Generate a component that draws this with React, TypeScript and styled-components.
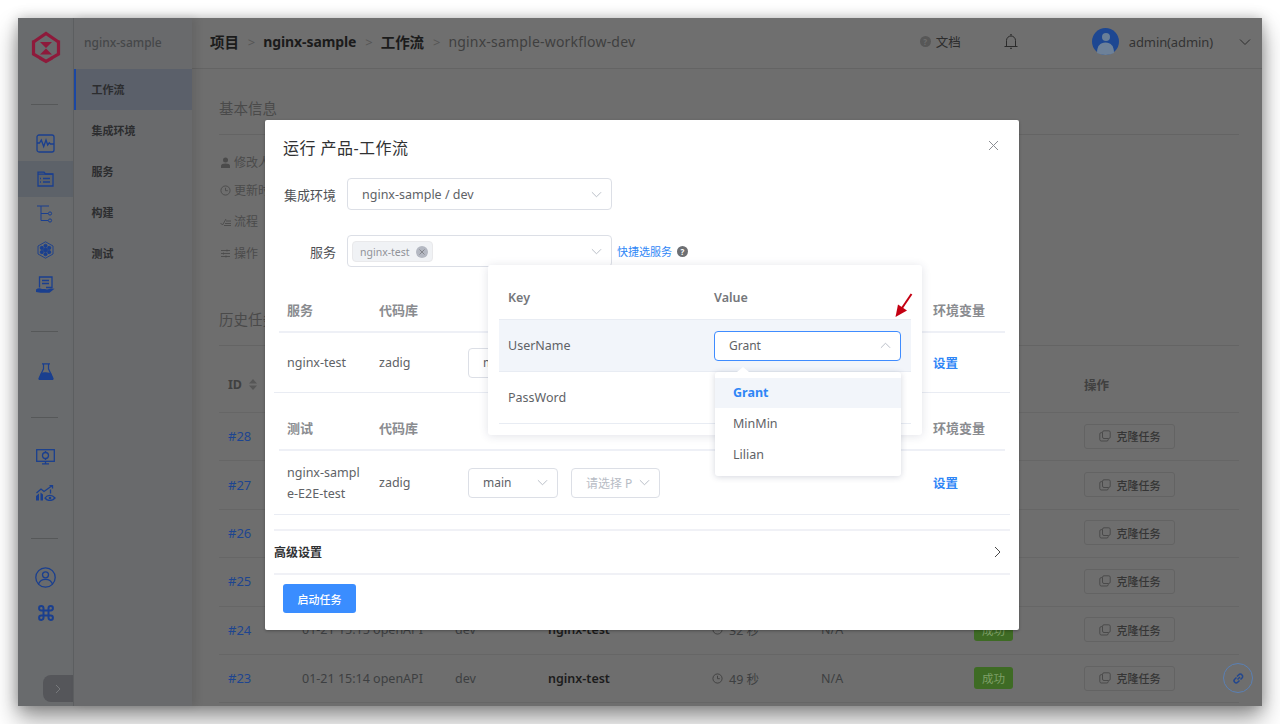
import React from "react";
import styled, { createGlobalStyle } from "styled-components";

const FONT = `"Noto Sans", "Noto Sans CJK SC", sans-serif`;

const Global = createGlobalStyle`
  html, body { margin: 0; padding: 0; background: #fff; }
  body { font-family: ${FONT}; }
  * { box-sizing: border-box; }
`;

const Page = styled.div`
  width: 1280px; height: 724px; padding: 18px; background: #fff; overflow: hidden;
`;
const Win = styled.div`
  position: relative; display: flex; width: 1244px; height: 688px; background: #6e6e6e;
  box-shadow: 0 12px 22px rgba(0,0,0,.42), 0 0 12px rgba(0,0,0,.22);
`;

/* ---------- icon rail ---------- */
const Rail = styled.aside`
  position: relative; flex: 0 0 56px; display: flex; flex-direction: column;
  background: #696b6d; border-right: 1px solid #5e6062;
`;
const LogoBox = styled.div`
  height: 58px; display: flex; align-items: center; justify-content: center;
`;
const RailRule = styled.div<{ $top: number; $bottom: number }>`
  width: 27px; height: 1px; background: #565859; flex: none;
  margin: ${p => p.$top}px 0 ${p => p.$bottom}px 13px;
`;
const RailItem = styled.div<{ $active?: boolean }>`
  height: 35.5px; display: flex; align-items: center; justify-content: center; flex: none;
  color: #1a3f8f; background: ${p => (p.$active ? "#5d6269" : "transparent")};
`;
const Collapse = styled.div`
  position: absolute; left: 25px; bottom: 4px; width: 30px; height: 27px;
  background: #55565a; border-radius: 8px 0 0 8px; display: flex; align-items: center; justify-content: center;
  color: #77797c;
`;

/* ---------- secondary nav ---------- */
const SideNav = styled.nav`
  flex: 0 0 118px; background: #696a6c; display: flex; flex-direction: column;
  box-shadow: 4px 0 8px rgba(0,0,0,.1); z-index: 1;
`;
const NavTitle = styled.div`
  height: 51px; display: flex; align-items: center; padding: 0 0 2px 10px;
  font-size: 12px; font-weight: 500; color: #454749;
`;
const NavItem = styled.div<{ $active?: boolean }>`
  height: 41px; display: flex; align-items: center; padding: 0 0 2px 15.5px;
  font-size: 11px; font-weight: 600; color: #2c2d2f;
  background: ${p => (p.$active ? "#5b606a" : "transparent")};
  border-left: 2.5px solid ${p => (p.$active ? "#1b47a3" : "transparent")};
`;

/* ---------- main ---------- */
const Main = styled.main`
  flex: 1; min-width: 0; display: flex; flex-direction: column; background: #6e6e6e;
`;
const Top = styled.header`
  height: 51px; flex: none; display: flex; align-items: center; padding: 0 0 3px 18px;
  background: #6f6f6f; border-bottom: 1px solid #646464;
`;
const Crumb = styled.span<{ $strong?: boolean }>`
  font-size: 14px; font-weight: ${p => (p.$strong ? 700 : 400)}; letter-spacing: ${p => (p.$strong ? -.1 : .2)}px;
  color: ${p => (p.$strong ? "#1b1b1b" : "#3f3f3f")};
`;
const CrumbStrongCn = styled(Crumb)`
  font-size: 14.5px;
`;
const CrumbSep = styled.span`
  margin: 0 8px 0 9px; font-size: 13px; color: #555; font-weight: 400;
`;
const TopRight = styled.div`
  margin-left: auto; display: flex; align-items: center; height: 100%; color: #2e2e2e;
`;
const DocLink = styled.div`
  display: flex; align-items: center; gap: 5px; font-size: 12.5px; color: #2c2c2c; margin-right: 43px;
`;
const HelpDot = styled.span`
  width: 11px; height: 11px; border-radius: 50%; background: #575757; color: #6e6e6e;
  font-size: 8px; font-weight: 700; line-height: 11px; text-align: center; flex: none;
`;
const BellGap = styled.span`
  width: 74px;
`;
const UserName = styled.span`
  font-size: 13px; color: #333; margin: 0 26px 0 10px; letter-spacing: -.1px;
`;
const EndGap = styled.span`
  width: 11px;
`;
const Content = styled.div`
  flex: 1; min-height: 0; padding: 27px 23px 0 27px; overflow: hidden;
`;
const SectionTitle = styled.h3`
  margin: 0; font-size: 14.5px; line-height: 24px; height: 39px; font-weight: 400; color: #4a4a4a;
  border-bottom: 1px solid #646464;
`;
const Info = styled.div`
  display: flex; flex-direction: column; padding: 13px 0 0 1px; height: 172px;
`;
const InfoRow = styled.div<{ $h: number }>`
  height: ${p => p.$h}px; display: flex; align-items: center; gap: 3px; color: #4b4b4b;
  font-size: 12px;
`;
const TableGrid = styled.div`
  display: grid; grid-template-columns: 83px 153px 93px 164px 109px 153px 110px 155px;
  align-items: center; height: 48.4px; padding-bottom: 1px; border-bottom: 1px solid #666; font-size: 12.5px; color: #3d3f41;
`;
const TableHead = styled(TableGrid)`
  height: 67px; padding: 11px 0 0; font-weight: 700; color: #404040; font-size: 12.5px;
`;
const IdHead = styled.span`
  padding-left: 9px; display: flex; align-items: center; gap: 7px; color: #404040;
`;
const RunId = styled.span`
  padding-left: 9px; color: #1d4590; font-size: 13px;
`;
const Service = styled.span`
  font-weight: 600; color: #1c1c1c;
`;
const Duration = styled.span`
  display: flex; align-items: center; gap: 6px;
`;
const Badge = styled.span`
  display: inline-flex; align-items: center; justify-content: center; width: 39px; height: 22px;
  border-radius: 3px; background: #3e6b24; color: #7ea068; font-size: 11.5px;
`;
const Clone = styled.div`
  width: 91px; height: 25px; border: 1px solid #636363; border-radius: 3px; display: flex;
  align-items: center; justify-content: center; gap: 6px; font-size: 11px; font-weight: 500; color: #353535;
`;
const FloatLink = styled.div`
  position: absolute; right: 9px; bottom: 13px; width: 30px; height: 30px; border-radius: 50%;
  border: 1px solid #5a80b4; color: #23478e; display: flex; align-items: center; justify-content: center;
`;

/* ---------- modal ---------- */
const Modal = styled.section`
  position: absolute; left: 247px; top: 102px; width: 754px; height: 510px; background: #fff;
  z-index: 5; border-radius: 2px; display: flex; flex-direction: column; box-shadow: 0 1px 3px rgba(0,0,0,.3);
`;
const ModalHead = styled.div`
  height: 58px; flex: none; display: flex; align-items: center; justify-content: space-between;
  padding: 0 20px 2px 18px;
`;
const ModalTitle = styled.h2`
  margin: 0; font-size: 16px; line-height: 22px; font-weight: 400; color: #303133; letter-spacing: .45px;
`;
const Close = styled.span`
  display: flex; color: #8b8e94; position: relative; top: -3px;
`;
const FormRow = styled.div<{ $mt?: number }>`
  display: flex; align-items: center; height: 32px; margin-top: ${p => p.$mt ?? 0}px; flex: none;
`;
const FormLabel = styled.label`
  width: 71px; text-align: right; margin-right: 11px; font-size: 13px; color: #4f5155;
`;
const Select = styled.div<{ $w: number; $h?: number; $focus?: boolean; $fs?: number }>`
  position: relative; width: ${p => p.$w}px; height: ${p => p.$h ?? 32}px; flex: none; background: #fff;
  border: 1px solid ${p => (p.$focus ? "#3f8cff" : "#dcdfe6")}; border-radius: 4px;
  display: flex; align-items: center; justify-content: space-between; color: #606266;
  font-size: ${p => p.$fs ?? 12.5}px; padding: 0 9px 0 14px;
`;
const Placeholder = styled.span`
  color: #b7bcc5; white-space: nowrap;
`;
const Chevron = styled.svg`
  flex: none; color: #b4b9c3;
`;
const Tag = styled.span`
  position: absolute; left: 4px; top: 5px; width: 81px; height: 21px; background: #f0f2f5;
  border: 1px solid #e9e9eb; border-radius: 4px; display: flex; align-items: center; justify-content: space-between;
  padding: 0 4px 0 7px; font-size: 10.5px; color: #909399;
`;
const TagClose = styled.span`
  width: 12px; height: 12px; border-radius: 50%; background: #b4b8c2; color: #84868c; display: flex;
  align-items: center; justify-content: center;
`;
const Quick = styled.span`
  margin-left: 5px; font-size: 11px; color: #2f86f6; display: flex; align-items: center; gap: 5px;
`;
const QuickHelp = styled.span`
  width: 11px; height: 11px; border-radius: 50%; background: #6d6f73; color: #fff; font-size: 8px;
  font-weight: 700; line-height: 11px; text-align: center;
`;
const EnvHead = styled.div<{ $h: number }>`
  flex: none; height: ${p => p.$h}px; margin: 0 14px; border-bottom: 2px solid #eef0f6; display: grid;
  grid-template-columns: 92px 89px 465px 1fr; align-items: end; padding: 0 0 12px 8px;
  font-size: 13px; font-weight: 600; color: #8a8c90;
`;
const EnvRow = styled.div<{ $h: number }>`
  flex: none; height: ${p => p.$h}px; margin: 0 9px; border-bottom: 1px solid #e9ecf3; display: grid;
  grid-template-columns: 92px 89px 465px 1fr; align-items: center; padding-left: 13px;
  font-size: 12.5px; color: #606266;
`;
const EnvName = styled.span`
  width: 74px; word-break: break-all; line-height: 21px;
`;
const Branches = styled.div`
  display: flex; gap: 13px;
`;
const SetLink = styled.span`
  color: #2f86f6; font-size: 12.5px; font-weight: 600;
`;
const Advanced = styled.div`
  flex: none; margin: 14px 9px 0; height: 46px; border-top: 2px solid #f0f1f6; border-bottom: 2px solid #f0f1f6;
  display: flex; align-items: center; justify-content: space-between; padding-right: 8px;
  font-size: 12px; font-weight: 600; color: #303133;
`;
const StartBar = styled.div`
  padding: 9px 18px 0;
`;
const StartBtn = styled.button`
  width: 73px; height: 29px; border: 0; border-radius: 3px; background: #3a8dff; color: #fff;
  font-family: ${FONT}; font-size: 11px; font-weight: 500; padding: 0;
`;

/* ---------- popover ---------- */
const Popover = styled.div`
  position: absolute; left: 470px; top: 247px; width: 434px; height: 170px; background: #fff; z-index: 6;
  border-radius: 3px; box-shadow: 0 1px 10px rgba(40,50,90,.14); padding: 0 11px;
  display: flex; flex-direction: column;
`;
const PopRow = styled.div<{ $h: number; $hi?: boolean; $line?: boolean }>`
  height: ${p => p.$h}px; flex: none; display: grid; grid-template-columns: 206px 1fr; align-items: center;
  padding-left: 9px; font-size: 12.5px; color: #606266;
  background: ${p => (p.$hi ? "#f2f5fa" : "transparent")};
  border-top: ${p => (p.$hi ? "1px solid #e8ecf3" : "0")};
  border-bottom: ${p => (p.$line ? "1px solid #e8ecf3" : "0")};
`;
const PopHead = styled(PopRow)`
  font-weight: 600; color: #75777b; padding-top: 10px;
`;
const Dropdown = styled.ul`
  position: absolute; left: 0; top: 40px; width: 186px; height: 104px; margin: 0; padding: 6px 0;
  list-style: none; background: #fff; border-radius: 3px; box-shadow: 0 1px 6px rgba(40,50,90,.2); z-index: 2;
  &::before {
    content: ""; position: absolute; left: 22px; top: -5px; border: 6px solid transparent; border-top: 0;
    border-bottom: 5px solid #fff;
  }
`;
const Option = styled.li<{ $on?: boolean }>`
  height: ${p => (p.$on ? 30 : 31)}px; padding-left: 18px; display: flex; align-items: center; font-size: 12.5px;
  color: ${p => (p.$on ? "#2f86f6" : "#606266")}; font-weight: ${p => (p.$on ? 700 : 400)};
  background: ${p => (p.$on ? "#f2f5fa" : "transparent")};
`;
const RedArrow = styled.svg`
  position: absolute; left: 876px; top: 275px; z-index: 7;
`;

const Down = ({ size = 11, up }: { size?: number; up?: boolean }) => (
  <Chevron width={size} height={size} viewBox="0 0 12 12" fill="none" stroke="currentColor" strokeWidth="1">
    <path d={up ? "M1 8.5 6 3.5l5 5" : "M1 3.5 6 8.5l5-5"} />
  </Chevron>
);
const CopyIcon = () => (
  <svg width="12" height="12" viewBox="0 0 12 12" fill="none" stroke="#4a4a4a" strokeWidth="1">
    <rect x="3.5" y=".8" width="7.7" height="7.7" rx="1.5" />
    <path d="M3.2 2.6H2.2A1.5 1.5 0 0 0 .8 4v5.6A1.5 1.5 0 0 0 2.2 11h5.7a1.5 1.5 0 0 0 1.4-1.5v-.6" />
  </svg>
);
const ClockIcon = ({ c = "#3f3f3f" }: { c?: string }) => (
  <svg width="11" height="11" viewBox="0 0 12 12" fill="none" stroke={c} strokeWidth="1">
    <circle cx="6" cy="6" r="5" /><path d="M6 3v3.2h2.5" />
  </svg>
);

const Logo = () => (
  <svg width="30" height="33" viewBox="0 0 30 33" fill="none">
    <path d="M2.5 11 15 2.500 27.500 11" stroke="#8e1a3b" strokeWidth="3.2" />
    <path d="M2.500 9.500v13.500l7 4.200M27.500 9.500v13.500l-7 4.200" stroke="#8e1a3b" strokeWidth="3.200" />
    <path d="M9 11h12l-6 6z M9 23.500h12l-6-6z" fill="#8e1a3b" />
    <path d="M9 27 15 30.500l6-3.500" stroke="#8e1a3b" strokeWidth="3.200" />
  </svg>
);
const sv = { fill: "none", stroke: "currentColor", strokeWidth: 1.3 } as const;
const Pulse = () => (
  <svg width="19" height="19" viewBox="0 0 19 19" {...sv}>
    <rect x="1" y="1" width="17" height="17" rx="2" />
    <path d="M1 9h2.5l1.8-3 2.4 6.5L10 6l1.7 5 1.6-2.2 1.2 1.2H18" />
  </svg>
);
const FolderList = () => (
  <svg width="17" height="16" viewBox="0 0 17 16" {...sv}>
    <path d="M1 3V1.2h6l1.6 1.8H16V15H1z" />
    <path d="M1 3.2h15M6 7.5h7M6 11h7" />
    <path d="M3 7.5h1M3 11h1" strokeWidth="1.6" />
  </svg>
);
const Tree = () => (
  <svg width="17" height="18" viewBox="0 0 17 18" fill="none" stroke="currentColor" strokeWidth="1">
    <path d="M0 1h12M4 1v14.500h7M4 8.500h7" />
    <circle cx="13" cy="8.500" r="1.600" /><circle cx="13" cy="15.500" r="1.600" />
  </svg>
);
const HexCube = () => (
  <svg width="17" height="18" viewBox="0 0 17 18" fill="none" stroke="currentColor" strokeWidth=".9">
    <path d="M8.500 .8 16 5v8l-7.500 4.200L1 13V5z" />
    <circle cx="8.500" cy="9" r="2" fill="currentColor" />
    <circle cx="8.500" cy="4.800" r="1.600" fill="currentColor" /><circle cx="8.500" cy="13.200" r="1.600" fill="currentColor" />
    <circle cx="4.800" cy="6.900" r="1.600" fill="currentColor" /><circle cx="12.200" cy="6.900" r="1.600" fill="currentColor" />
    <circle cx="4.800" cy="11.100" r="1.600" fill="currentColor" /><circle cx="12.200" cy="11.100" r="1.600" fill="currentColor" />
  </svg>
);
const HandScreen = () => (
  <svg width="19" height="18" viewBox="0 0 19 18" fill="none" stroke="currentColor" strokeWidth="1.3">
    <path d="M3.500 11.500V1h12.500v10.500H10" />
    <path d="M6 4.500h7M6 7.500h7" />
    <path d="M0 13.500c2-1.700 4-1.700 6-.5h3l2 .5 4-1 3.500.3-5 4H4.500L0 16z" fill="currentColor" stroke="none" />
  </svg>
);
const Flask = () => (
  <svg width="16" height="17" viewBox="0 0 16 17" fill="none" stroke="currentColor" strokeWidth="1.2">
    <path d="M4 .8h8M5.500 .8v5L1 15.500a.8.8 0 0 0 .7 1h12.600a.8.8 0 0 0 .7-1L10.500 5.800v-5" />
    <path d="M3 10c3-1.400 6-.3 10 0l2 5.500a.8.8 0 0 1-.7 1H1.700a.8.8 0 0 1-.7-1z" fill="currentColor" stroke="none" />
  </svg>
);
const Monitor = () => (
  <svg width="19" height="16" viewBox="0 0 19 16" {...sv}>
    <rect x=".7" y=".7" width="17.600" height="11.600" />
    <circle cx="9.500" cy="6.500" r="3" /><path d="M9.500 2v1.500M9.500 9.500V11M6 14.800h7M9.500 12.300v2.500" />
  </svg>
);
const ChartEye = () => (
  <svg width="20" height="16" viewBox="0 0 20 16" fill="none" stroke="currentColor" strokeWidth="1.3">
    <path d="M.5 8 5 4l3 2.500L16 .8" />
    <path d="M13.500 .5H16.500V3.500" />
    <path d="M0 15.500V11l3-2.500v7zM4.500 15.500V7.500L7 9.500v6z" fill="currentColor" stroke="none" />
    <path d="M9 13c2.500-3.600 7-3.600 10 0-3 3.300-7.500 3.300-10 0z" />
    <circle cx="14" cy="13" r="1.300" fill="currentColor" stroke="none" />
    <path d="M14.500 4.500v4" />
  </svg>
);
const UserCircle = () => (
  <svg width="21" height="21" viewBox="0 0 21 21" {...sv}>
    <circle cx="10.500" cy="10.500" r="9.700" />
    <circle cx="10.500" cy="7.800" r="3" />
    <path d="M3.500 17c1.200-3.300 3.600-4.700 7-4.700s5.800 1.400 7 4.700" />
  </svg>
);
const Cmd = () => (
  <svg width="16" height="16" viewBox="0 0 16 16" fill="none" stroke="currentColor" strokeWidth="2">
    <path d="M5.500 5.500h5v5h-5zM5.500 5.500V3.200a2.200 2.200 0 1 0-2.200 2.300h2.200M10.500 5.500V3.200a2.200 2.200 0 1 1 2.200 2.300h-2.200M5.500 10.500v2.300a2.200 2.200 0 1 1-2.200-2.300h2.200M10.500 10.500v2.300a2.200 2.200 0 1 0 2.200-2.300h-2.200" />
  </svg>
);
const Bell = () => (
  <svg width="14" height="15" viewBox="0 0 14 15" fill="none" stroke="#2b2b2b" strokeWidth="1">
    <path d="M.5 12.500h13M2.500 12.500V6.500a4.500 4.500 0 0 1 9 0v6M6 .8h2M6 14.300h2" />
  </svg>
);
const Avatar = () => (
  <svg width="27" height="27" viewBox="0 0 27 27">
    <circle cx="13.500" cy="13.500" r="13.500" fill="#1d4792" />
    <circle cx="14" cy="9" r="4" fill="#697f98" />
    <path d="M5 25c0-7 3-10.500 8.500-10.500S22 18 22 25c-5 2.600-12 2.600-17 0z" fill="#6d8199" />
  </svg>
);

const rows = [
  ["#28", "01-21 15:22 openAPI", "40 秒"],
  ["#27", "01-21 15:20 openAPI", "38 秒"],
  ["#26", "01-21 15:19 openAPI", "41 秒"],
  ["#25", "01-21 15:17 openAPI", "35 秒"],
  ["#24", "01-21 15:15 openAPI", "32 秒"],
  ["#23", "01-21 15:14 openAPI", "49 秒"],
];

export default function App() {
  return (
    <Page>
      <Global />
      <Win>
        <Rail>
          <LogoBox><Logo /></LogoBox>
          <RailRule $top={28} $bottom={20.5} />
          <RailItem><Pulse /></RailItem>
          <RailItem $active><FolderList /></RailItem>
          <RailItem><Tree /></RailItem>
          <RailItem><HexCube /></RailItem>
          <RailItem><HandScreen /></RailItem>
          <RailRule $top={28} $bottom={21.5} />
          <RailItem><Flask /></RailItem>
          <RailRule $top={28} $bottom={21.5} />
          <RailItem><Monitor /></RailItem>
          <RailItem><ChartEye /></RailItem>
          <RailRule $top={27} $bottom={21} />
          <RailItem><UserCircle /></RailItem>
          <RailItem><Cmd /></RailItem>
          <Collapse>
            <svg width="8" height="10" viewBox="0 0 8 10" fill="none" stroke="currentColor"><path d="m2 1 4 4-4 4" /></svg>
          </Collapse>
        </Rail>
        <SideNav>
          <NavTitle>nginx-sample</NavTitle>
          <NavItem $active>工作流</NavItem>
          <NavItem>集成环境</NavItem>
          <NavItem>服务</NavItem>
          <NavItem>构建</NavItem>
          <NavItem>测试</NavItem>
        </SideNav>
        <Main>
          <Top>
            <CrumbStrongCn $strong>项目</CrumbStrongCn><CrumbSep>&gt;</CrumbSep>
            <Crumb $strong>nginx-sample</Crumb><CrumbSep>&gt;</CrumbSep>
            <CrumbStrongCn $strong>工作流</CrumbStrongCn><CrumbSep>&gt;</CrumbSep>
            <Crumb>nginx-sample-workflow-dev</Crumb>
            <TopRight>
              <DocLink><HelpDot>?</HelpDot>文档</DocLink>
              <Bell />
              <BellGap />
              <Avatar />
              <UserName>admin(admin)</UserName>
              <svg width="12" height="12" viewBox="0 0 12 12" fill="none" stroke="#2e2e2e" strokeWidth="1">
                <path d="M1 3.500 6 8.500l5-5" />
              </svg>
              <EndGap />
            </TopRight>
          </Top>
          <Content>
            <SectionTitle>基本信息</SectionTitle>
            <Info>
              <InfoRow $h={28}>
                <svg width="11" height="11" viewBox="0 0 11 11" fill="#4b4b4b"><circle cx="5.500" cy="3" r="2.500" /><path d="M1 11V8.800C1 7.300 3 6.500 5.500 6.500S10 7.300 10 8.800V11z" /></svg>修改人
              </InfoRow>
              <InfoRow $h={28}><ClockIcon c="#4b4b4b" />更新时间</InfoRow>
              <InfoRow $h={34}>
                <svg width="11" height="11" viewBox="0 0 11 11" fill="none" stroke="#4b4b4b" strokeWidth=".9"><path d="m.5 7 2 2 3.500-6M6 5h5M5 7.500h6M4 9.500h7" /></svg>流程
              </InfoRow>
              <InfoRow $h={30}>
                <svg width="11" height="11" viewBox="0 0 11 11" fill="none" stroke="#4b4b4b" strokeWidth=".9"><path d="M1 2.500h9M1 5.500h9M1 8.500h9M7 1.500v2M3.500 4.500v2M6 7.500v2" /></svg>操作
              </InfoRow>
            </Info>
            <SectionTitle>历史任务</SectionTitle>
            <TableHead>
              <IdHead>
                ID
                <svg width="8" height="11" viewBox="0 0 8 11" fill="#565656"><path d="M4 0 8 4.500H0zM4 11 0 6.500h8z" /></svg>
              </IdHead>
              <span /><span /><span /><span /><span /><span />
              <span>操作</span>
            </TableHead>
            {rows.map(r => (
              <TableGrid key={r[0]}>
                <RunId>{r[0]}</RunId>
                <span>{r[1]}</span>
                <span>dev</span>
                <Service>nginx-test</Service>
                <Duration><ClockIcon />{r[2]}</Duration>
                <span>N/A</span>
                <span><Badge>成功</Badge></span>
                <Clone><CopyIcon />克隆任务</Clone>
              </TableGrid>
            ))}
          </Content>
        </Main>
        <FloatLink>
          <svg width="13" height="13" viewBox="0 0 13 13" fill="none" stroke="currentColor" strokeWidth="1.5">
            <path d="M5.500 7.500 8 5M5 4.500l1.800-1.800a2 2 0 0 1 3 .1 2.100 2.100 0 0 1 .4 3L8.500 7.500M4.500 5.500 2.700 7.300a2.100 2.100 0 0 0 3 3L7.500 8.500" />
          </svg>
        </FloatLink>

        <Modal>
          <ModalHead>
            <ModalTitle>运行 产品-工作流</ModalTitle>
            <Close>
              <svg width="11" height="11" viewBox="0 0 11 11" stroke="currentColor" strokeWidth="1"><path d="m1 1 9 9M10 1l-9 9" /></svg>
            </Close>
          </ModalHead>
          <FormRow>
            <FormLabel>集成环境</FormLabel>
            <Select $w={265}>nginx-sample / dev<Down /></Select>
          </FormRow>
          <FormRow $mt={25}>
            <FormLabel>服务</FormLabel>
            <Select $w={265}>
              <Tag>nginx-test<TagClose><svg width="6" height="6" viewBox="0 0 6 6" stroke="currentColor"><path d="m.5 .5 5 5M5.500 .5l-5 5" /></svg></TagClose></Tag>
              <span /><Down />
            </Select>
            <Quick>快捷选服务<QuickHelp>?</QuickHelp></Quick>
          </FormRow>
          <EnvHead $h={66}><span>服务</span><span>代码库</span><span /><span>环境变量</span></EnvHead>
          <EnvRow $h={60}>
            <EnvName>nginx-test</EnvName><span>zadig</span>
            <Branches><Select $w={90} $h={30} $fs={12}>main<Down /></Select></Branches>
            <SetLink>设置</SetLink>
          </EnvRow>
          <EnvHead $h={58}><span>测试</span><span>代码库</span><span /><span>环境变量</span></EnvHead>
          <EnvRow $h={64}>
            <EnvName>nginx-sample-E2E-test</EnvName><span>zadig</span>
            <Branches>
              <Select $w={90} $h={30} $fs={12}>main<Down /></Select>
              <Select $w={89} $h={30} $fs={12}><Placeholder>请选择 P</Placeholder><Down /></Select>
            </Branches>
            <SetLink>设置</SetLink>
          </EnvRow>
          <Advanced>
            高级设置
            <svg width="9" height="12" viewBox="0 0 9 12" fill="none" stroke="#4a4a4a" strokeWidth="1"><path d="m2 1 5 5-5 5" /></svg>
          </Advanced>
          <StartBar><StartBtn>启动任务</StartBtn></StartBar>
        </Modal>

        <Popover>
          <PopHead $h={54}><span>Key</span><span>Value</span></PopHead>
          <PopRow $h={53} $hi $line>
            <span>UserName</span>
            <Select $w={187} $h={30} $focus $fs={12}>
              Grant<Down up />
              <Dropdown>
                <Option $on>Grant</Option>
                <Option>MinMin</Option>
                <Option>Lilian</Option>
              </Dropdown>
            </Select>
          </PopRow>
          <PopRow $h={52} $line><span>PassWord</span><span /></PopRow>
        </Popover>
        <RedArrow width="20" height="26" viewBox="0 0 20 26">
          <path d="M17.500 1 7 16.500" stroke="#c40012" strokeWidth="2" />
          <path d="M1.500 24 4 11.500l9 6z" fill="#c40012" />
        </RedArrow>
      </Win>
    </Page>
  );
}
